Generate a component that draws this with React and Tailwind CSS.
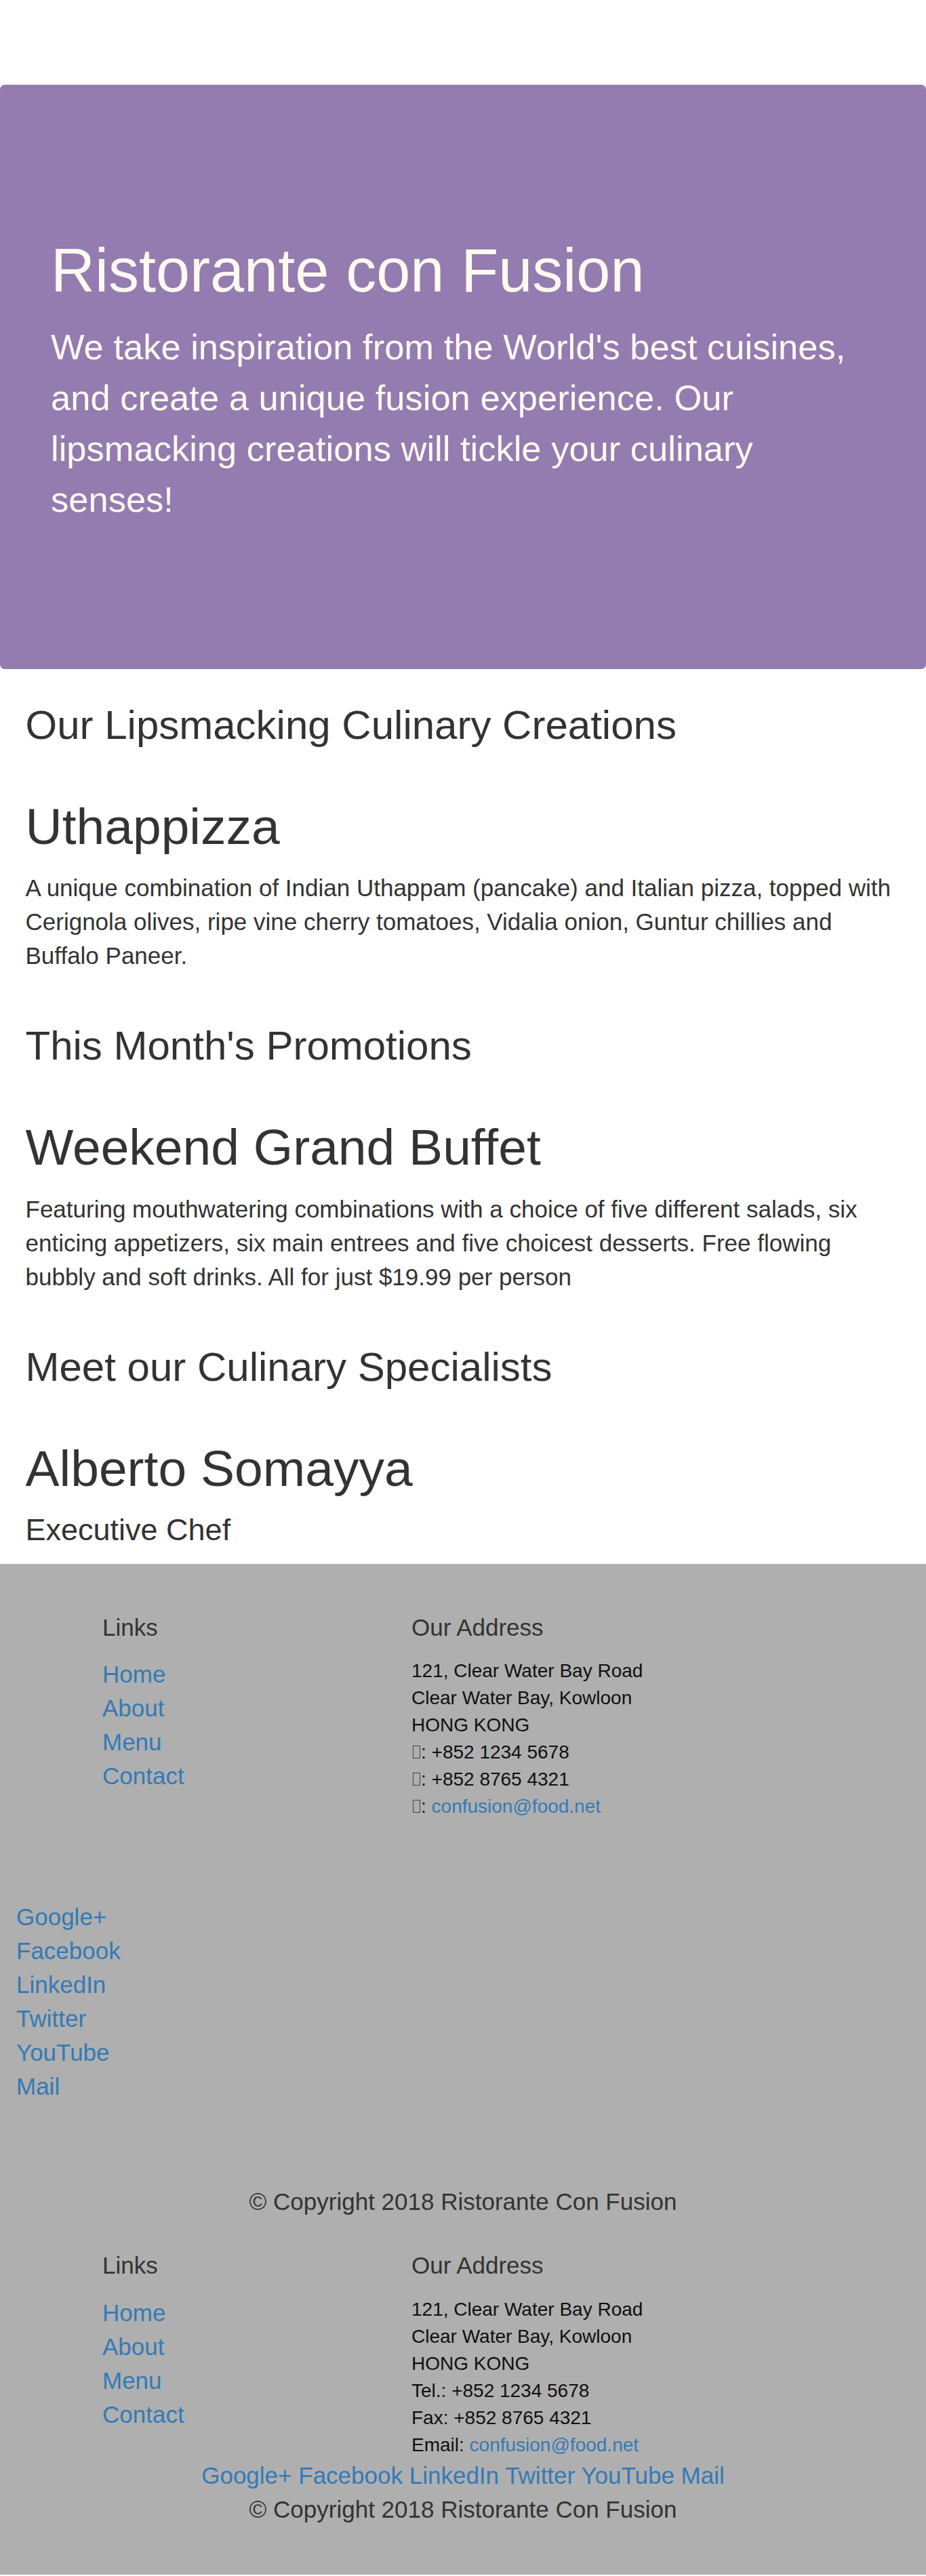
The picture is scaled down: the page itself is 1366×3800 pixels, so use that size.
const LINK = "text-[#337ab7]";

function Tofu() {
  return (
    <span className="inline-block align-baseline w-[11px] h-[19px] ml-[2px] mr-[1px] border border-[#444]" />
  );
}

function Section({ title, name, children, sub }) {
  return (
    <section className="flex flex-col">
      <h3 className="mt-[50px] mb-[25px] text-[60px] leading-[66px]">{title}</h3>
      <h2 className="mt-[50px] mb-[25px] text-[75px] leading-[82.5px]">{name}</h2>
      {children ? (
        <p className="mb-[25px] text-[35px] leading-[50px]">{children}</p>
      ) : null}
      {sub ? (
        <h4 className="mb-[25px] text-[45px] leading-[49.5px]">{sub}</h4>
      ) : null}
    </section>
  );
}

function FooterColumns({ icons }) {
  const links = ["Home", "About", "Menu", "Contact"];
  return (
    <div className="flex">
      <div className="w-[607px] pl-[151px] flex flex-col">
        <h5 className="mt-[25px] mb-[25px] text-[35px] leading-[38.5px]">Links</h5>
        <ul className="mb-[25px] text-[35px] leading-[50px]">
          {links.map((l) => (
            <li key={l}>
              <a href="#" className={LINK}>
                {l}
              </a>
            </li>
          ))}
        </ul>
      </div>
      <div className="flex flex-col">
        <h5 className="mt-[25px] mb-[25px] text-[35px] leading-[38.5px]">Our Address</h5>
        <address className="not-italic text-[28px] leading-[40px] text-[#0f0f0f]">
          <div>121, Clear Water Bay Road</div>
          <div>Clear Water Bay, Kowloon</div>
          <div>HONG KONG</div>
          {icons ? (
            <>
              <div>
                <Tofu />: +852 1234 5678
              </div>
              <div>
                <Tofu />: +852 8765 4321
              </div>
              <div>
                <Tofu />:{" "}
                <a href="#" className={LINK}>
                  confusion@food.net
                </a>
              </div>
            </>
          ) : (
            <>
              <div>Tel.: +852 1234 5678</div>
              <div>Fax: +852 8765 4321</div>
              <div>
                Email:{" "}
                <a href="#" className={LINK}>
                  confusion@food.net
                </a>
              </div>
            </>
          )}
        </address>
      </div>
    </div>
  );
}

export default function App() {
  const social = ["Google+", "Facebook", "LinkedIn", "Twitter", "YouTube", "Mail"];
  return (
    <div className="font-['Liberation_Sans',Arial,Helvetica,sans-serif] text-[#333] bg-white">
      <div className="h-[125px]" />
      <header className="flex flex-col bg-[#947cb0] text-[#fffaf0] rounded-[7px] px-[75px] pt-[175px] pb-[175px]">
        <h1 className="mt-[50px] mb-[25px] text-[90px] leading-[99px]">Ristorante con Fusion</h1>
        <p className="mb-[37.5px] text-[52.5px] leading-[75px]">
          We take inspiration from the World's best cuisines, and create a unique fusion
          experience. Our lipsmacking creations will tickle your culinary senses!
        </p>
      </header>

      <main className="px-[37.5px] flex flex-col">
        <Section title="Our Lipsmacking Culinary Creations" name="Uthappizza">
          A unique combination of Indian Uthappam (pancake) and Italian pizza, topped with
          Cerignola olives, ripe vine cherry tomatoes, Vidalia onion, Guntur chillies and
          Buffalo Paneer.
        </Section>
        <Section title="This Month's Promotions" name="Weekend Grand Buffet">
          Featuring mouthwatering combinations with a choice of five different salads, six
          enticing appetizers, six main entrees and five choicest desserts. Free flowing
          bubbly and soft drinks. All for just $19.99 per person
        </Section>
        <Section
          title="Meet our Culinary Specialists"
          name="Alberto Somayya"
          sub="Executive Chef"
        />
      </main>

      <footer className="bg-[#afafaf] pt-[50px] pb-[46px] flex flex-col">
        <FooterColumns icons />
        <div className="pl-[24px] pt-[118px] pb-[120px] flex flex-col items-start text-[35px] leading-[50px]">
          {social.map((s) => (
            <a key={s} href="#" className={LINK}>
              {s}
            </a>
          ))}
        </div>
        <p className="mb-[25px] text-center text-[35px] leading-[50px]">
          © Copyright 2018 Ristorante Con Fusion
        </p>

        <FooterColumns icons={false} />
        <div className="text-center text-[35px] leading-[50px]">
          {social.map((s, i) => (
            <span key={s}>
              <a href="#" className={LINK}>
                {s}
              </a>
              {i < social.length - 1 ? " " : ""}
            </span>
          ))}
        </div>
        <p className="mb-[25px] text-center text-[35px] leading-[50px]">
          © Copyright 2018 Ristorante Con Fusion
        </p>
      </footer>
    </div>
  );
}
